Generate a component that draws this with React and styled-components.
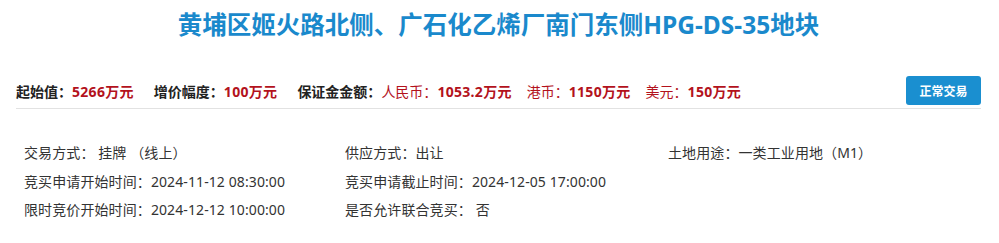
import styled, { createGlobalStyle } from "styled-components";

const GlobalStyle = createGlobalStyle`
  body {
    margin: 0;
    background: #fff;
    font-family: "Noto Sans", "Noto Sans CJK SC", sans-serif;
  }
`;

const Page = styled.div`
  padding: 0 18px 0 16px;
`;

const Title = styled.h1`
  margin: 8px 0 0;
  text-align: center;
  font-size: 24.5px;
  line-height: 34px;
  font-weight: 700;
  color: #1a89cc;
`;

const StatsBar = styled.div`
  display: flex;
  align-items: center;
  justify-content: space-between;
  margin-top: 34px;
  padding-bottom: 3px;
  border-bottom: 1px solid #e2e2e2;
`;

const Stats = styled.div`
  display: flex;
  align-items: center;
  gap: 20px;
  font-size: 14px;
  font-weight: 700;
  color: #222;
`;

const Group = styled.div`
  display: flex;
  gap: 15px;
`;

const Stat = styled.span`
  white-space: nowrap;
`;

const Label = styled.span`
  color: ${(p) => (p.$red ? "#b3121c" : "#222")};
  font-weight: ${(p) => (p.$red ? 400 : 700)};
`;

const Value = styled.span`
  color: #b3121c;
  font-weight: 700;
  letter-spacing: 0.3px;
`;

const StatusButton = styled.button`
  width: 75px;
  height: 29px;
  border: none;
  border-radius: 3px;
  background: #1a8fd0;
  color: #fff;
  font-family: inherit;
  font-size: 12px;
  font-weight: 700;
  cursor: pointer;
`;

const Details = styled.div`
  display: grid;
  grid-template-columns: 321px 323px 1fr;
  margin-top: 30px;
  padding-left: 8px;
  font-size: 14px;
  line-height: 28.5px;
  color: #333;
`;

const Cell = styled.div`
  white-space: nowrap;
  letter-spacing: 0.1px;
`;

export default function App() {
  return (
    <Page>
      <GlobalStyle />
      <Title>黄埔区姬火路北侧、广石化乙烯厂南门东侧HPG-DS-35地块</Title>
      <StatsBar>
        <Stats>
          <Stat>
            <Label>起始值：</Label>
            <Value>5266万元</Value>
          </Stat>
          <Stat>
            <Label>增价幅度：</Label>
            <Value>100万元</Value>
          </Stat>
          <Group>
            <Stat>
              <Label>保证金金额：</Label>
              <Label $red>人民币：</Label>
              <Value>1053.2万元</Value>
            </Stat>
            <Stat>
              <Label $red>港币：</Label>
              <Value>1150万元</Value>
            </Stat>
            <Stat>
              <Label $red>美元：</Label>
              <Value>150万元</Value>
            </Stat>
          </Group>
        </Stats>
        <StatusButton>正常交易</StatusButton>
      </StatsBar>
      <Details>
        <Cell>交易方式： 挂牌 （线上）</Cell>
        <Cell>供应方式：出让</Cell>
        <Cell>土地用途：一类工业用地（M1）</Cell>
        <Cell>竞买申请开始时间：2024-11-12 08:30:00</Cell>
        <Cell>竞买申请截止时间：2024-12-05 17:00:00</Cell>
        <Cell />
        <Cell>限时竞价开始时间：2024-12-12 10:00:00</Cell>
        <Cell>是否允许联合竞买： 否</Cell>
      </Details>
    </Page>
  );
}
